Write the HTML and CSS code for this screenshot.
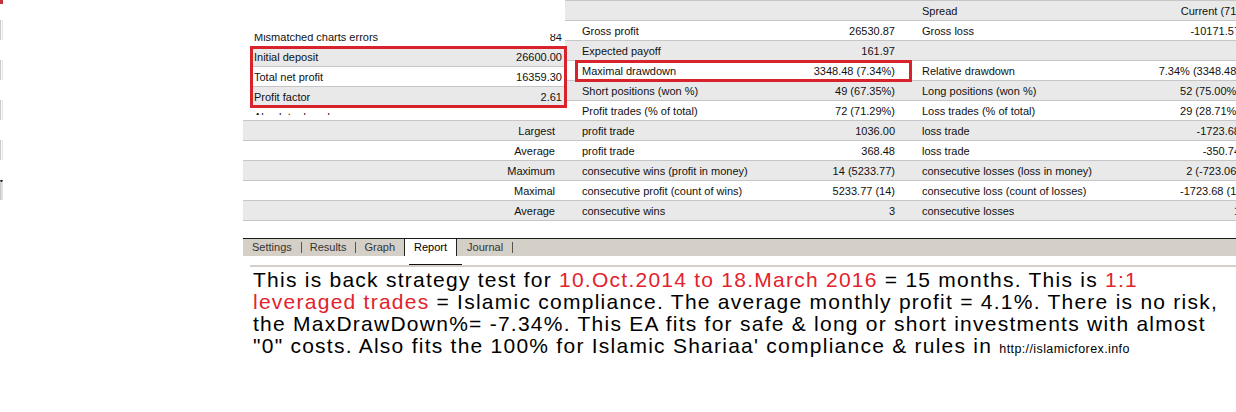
FILE: index.html
```html
<!DOCTYPE html>
<html lang="en">
  <head>
    <meta charset="utf-8" />
    <title>Strategy Tester Report</title>
    <link rel="stylesheet" href="styles.css">
  </head>

  <body>
    <div class="page">

      <!--bits of another window left at the edge of the picture-->
      <div class="edge">
        <div class="edgeRed"></div>
        <div class="edgeCell"></div>
        <div class="edgeCell"></div>
        <div class="edgeCell"></div>
        <div class="edgeCell"></div>
        <div class="edgeCell dark"></div>
      </div>

      <div class="report">

        <!--Report table-->
        <div class="grid">
          <div class="row gray">
            <div class="c1"></div>
            <div class="c2"><span></span><span></span></div>
            <div class="c3"><span>Spread</span><span>Current (71)</span></div>
          </div>
          <div class="row">
            <div class="c1"></div>
            <div class="c2"><span>Gross profit</span><span>26530.87</span></div>
            <div class="c3"><span>Gross loss</span><span>-10171.57</span></div>
          </div>
          <div class="row gray">
            <div class="c1"></div>
            <div class="c2"><span>Expected payoff</span><span>161.97</span></div>
            <div class="c3"><span></span><span></span></div>
          </div>
          <div class="row">
            <div class="c1"></div>
            <div class="c2"><span>Maximal drawdown</span><span>3348.48 (7.34%)</span></div>
            <div class="c3"><span>Relative drawdown</span><span>7.34% (3348.48)</span></div>
          </div>
          <div class="row gray">
            <div class="c1"></div>
            <div class="c2"><span>Short positions (won %)</span><span>49 (67.35%)</span></div>
            <div class="c3"><span>Long positions (won %)</span><span>52 (75.00%)</span></div>
          </div>
          <div class="row">
            <div class="c1"></div>
            <div class="c2"><span>Profit trades (% of total)</span><span>72 (71.29%)</span></div>
            <div class="c3"><span>Loss trades (% of total)</span><span>29 (28.71%)</span></div>
          </div>
          <div class="row gray">
            <div class="c1">Largest</div>
            <div class="c2"><span>profit trade</span><span>1036.00</span></div>
            <div class="c3"><span>loss trade</span><span>-1723.68</span></div>
          </div>
          <div class="row">
            <div class="c1">Average</div>
            <div class="c2"><span>profit trade</span><span>368.48</span></div>
            <div class="c3"><span>loss trade</span><span>-350.74</span></div>
          </div>
          <div class="row gray">
            <div class="c1">Maximum</div>
            <div class="c2"><span>consecutive wins (profit in money)</span><span>14 (5233.77)</span></div>
            <div class="c3"><span>consecutive losses (loss in money)</span><span>2 (-723.06)</span></div>
          </div>
          <div class="row">
            <div class="c1">Maximal</div>
            <div class="c2"><span>consecutive profit (count of wins)</span><span>5233.77 (14)</span></div>
            <div class="c3"><span>consecutive loss (count of losses)</span><span>-1723.68 (1)</span></div>
          </div>
          <div class="row gray">
            <div class="c1">Average</div>
            <div class="c2"><span>consecutive wins</span><span>3</span></div>
            <div class="c3"><span>consecutive losses</span><span>1</span></div>
          </div>
        </div>

        <!--Cut out piece pasted over the left column-->
        <div class="overlay">
          <div class="ovClip">
            <div class="ovRows">
              <div class="ovRow"><span>Mismatched charts errors</span><span>84</span></div>
              <div class="ovRow gray"><span>Initial deposit</span><span>26600.00</span></div>
              <div class="ovRow"><span>Total net profit</span><span>16359.30</span></div>
              <div class="ovRow gray"><span>Profit factor</span><span>2.61</span></div>
              <div class="ovRow"><span>Absolute drawdown</span><span></span></div>
            </div>
          </div>
        </div>

        <div class="redBox boxLeft"></div>
        <div class="redBox boxDraw"></div>

        <!--Tabs-->
        <div class="tabs">
          <span class="tab first sep">Settings</span>
          <span class="tab sep">Results</span>
          <span class="tab last">Graph</span>
          <span class="tab active">Report</span>
          <span class="tab next sep">Journal</span>
        </div>
        <div class="rule"></div>

        <p class="note">
          This is back strategy test for <span class="red">10.Oct.2014 to 18.March 2016</span> = 15 months.
          This is <span class="red">1:1<br>leveraged trades</span> = Islamic compliance. The average monthly
          profit = 4.1%. There is no risk,<br>the MaxDrawDown%= -7.34%. This EA fits for safe &amp; long or short
          investments with almost<br>"0" costs. Also fits the 100% for Islamic Shariaa' compliance &amp; rules in
          <span class="link">http://islamicforex.info</span>
        </p>

      </div>
    </div>
  </body>
</html>
```

FILE: styles.css
```css
html, body {overflow: hidden;}

body {margin: 0;
      font-family: "Liberation Sans", Arial, sans-serif;
      background-color: #fff;
      color: #111;}

.page {display: flex;
       align-items: flex-start;}

/* left edge scraps */
.edge {width: 3px;
       flex: none;
       display: flex;
       flex-direction: column;}
.edgeRed {height: 4px; background-color: #c4323a;}
.edgeCell {height: 20px;
           margin-top: 16px;
           box-sizing: border-box;
           border-left: 1px solid #c9c9c9;
           border-right: 1px solid #e4e4e4;}
.edgeCell + .edgeCell {margin-top: 20px;}
.edgeCell.dark {border-top: 2px solid #222; background-color: #dcdcdc;}

.report {position: relative;
         margin-left: 240px;
         width: 1007px;
         flex: none;}

/* table */
.grid {border-top: 1px solid #c6c6c6;
       font-size: 11px;}

.row {display: grid;
      grid-template-columns: 322px 340px 345px;
      height: 19px;
      line-height: 21px;
      border-bottom: 1px solid #c6c6c6;
      white-space: nowrap;}

.gray {background-color: #e9e9e9;}

.c1 {text-align: right;
     padding-right: 10px;}

.c2, .c3 {display: flex;
          justify-content: space-between;
          padding: 0 10px 0 17px;}

/* pasted piece */
.overlay {position: absolute;
          left: 0;
          top: 0;
          width: 322px;
          height: 116px;
          box-sizing: border-box;
          padding: 34px 0 0 7px;
          background-color: #fff;}

.ovClip {height: 81px;
         overflow: hidden;
         font-size: 11px;}

.ovRows {margin-top: -7px;}

.ovRow {display: flex;
        justify-content: space-between;
        height: 19px;
        line-height: 21px;
        padding: 0 3px 0 4px;
        border-bottom: 1px solid #c6c6c6;
        white-space: nowrap;}

.redBox {position: absolute;
         box-sizing: border-box;
         border: 3px solid #d8232d;}
.boxLeft {left: 7px; top: 46px; width: 317px; height: 62px;}
.boxDraw {left: 332px; top: 60px; width: 337px; height: 22px;}

/* tabs */
.tabs {display: flex;
       margin-top: 17px;
       height: 17px;
       border-top: 1px solid #1a1a1a;
       background-color: #d4d0c8;
       font-size: 11px;
       line-height: 17px;
       color: #333;}

.tab {display: flex;
      align-items: center;
      padding-left: 8px;}
.tab.first {padding-left: 9px;}
.tab.last {padding-right: 9px;}
.tab.next {padding-left: 10px;}
.tab.sep::after {content: "";
                 width: 1px;
                 height: 11px;
                 margin-left: 9px;
                 background-color: #555;}

.tab.active {padding: 0 9px;
             border-left: 1px solid #222;
             border-right: 1px solid #222;
             background-color: #fff;
             color: #000;}

.rule {position: relative;
       height: 2px;
       margin: 9px 0 0 7px;
       background-color: #d4d0c8;}
.rule::before {content: "";
               position: absolute;
               left: 159px;
               top: -1px;
               width: 53px;
               height: 1px;
               background-color: #111;}

/* description */
.note {margin: 2px 0 0;
       padding-left: 10px;
       width: 990px;
       font-size: 21px;
       line-height: 22px;
       letter-spacing: 1.25px;
       color: #000;}

.red {color: #e2222c;}
.link {font-size: 12.5px;
       letter-spacing: 0.4px;}
```
